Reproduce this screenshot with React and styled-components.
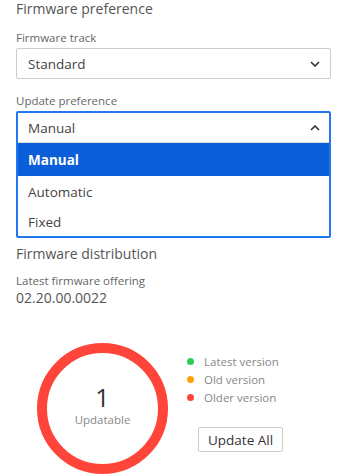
import React from 'react'
import styled, { createGlobalStyle } from 'styled-components'

const Global = createGlobalStyle`
  body {
    margin: 0;
    background: #fff;
    font-family: 'Open Sans', Lato, sans-serif;
  }
`

const Page = styled.div`
  width: 347px;
  height: 475px;
  overflow: hidden;
  padding: 1px 16px 0;
  box-sizing: border-box;
`

const Heading = styled.div`
  font-size: 14px;
  color: #555;
  line-height: 16px;
  margin-top: ${p => p.top || 0}px;
`

const Label = styled.div`
  font-size: 11.5px;
  color: #666;
  line-height: 14px;
  margin-top: ${p => p.top || 0}px;
  margin-bottom: ${p => p.bottom ?? 3}px;
`

const Select = styled.div`
  width: 315px;
  box-sizing: border-box;
  border: ${p => (p.open ? '2px solid #1f78f0' : '1px solid #ccc')};
  border-radius: 2px;
  background: #fff;
`

const SelectHead = styled.div`
  height: 29px;
  display: flex;
  align-items: center;
  justify-content: space-between;
  padding: 0 ${p => (p.open ? 9 : 10)}px 0 ${p => (p.open ? 10 : 11)}px;
  font-size: 13.5px;
  color: #444;
  border-bottom: ${p => (p.open ? '1px solid #ddd' : 'none')};
`

const Option = styled.div`
  height: ${p => p.h}px;
  display: flex;
  align-items: center;
  padding-left: 10px;
  font-size: 13.5px;
  color: ${p => (p.active ? '#fff' : '#444')};
  background: ${p => (p.active ? '#0b5ed7' : '#fff')};
  font-weight: ${p => (p.active ? 700 : 400)};
`

const Version = styled.div`
  font-size: 14px;
  color: #555;
  line-height: 16px;
`

const Chart = styled.div`
  display: flex;
  margin-top: 37px;
  margin-left: 21px;
`

const Ring = styled.div`
  width: 131px;
  height: 131px;
  box-sizing: border-box;
  border-radius: 50%;
  border: 10px solid #ff453a;
  padding-bottom: 7px;
  display: flex;
  flex-direction: column;
  align-items: center;
  justify-content: center;
  flex-shrink: 0;
`

const Count = styled.div`
  font-size: 25px;
  color: #333;
  line-height: 28px;
`

const CountLabel = styled.div`
  font-size: 11.5px;
  color: #888;
  margin-top: 1px;
`

const Side = styled.div`
  margin-left: 19px;
  padding-top: 9px;
  display: flex;
  flex-direction: column;
`

const LegendRow = styled.div`
  display: flex;
  align-items: center;
  height: 18px;
  font-size: 11.5px;
  color: #888;
`

const Dot = styled.span`
  width: 7px;
  height: 7px;
  border-radius: 50%;
  background: ${p => p.color};
  margin-right: 10px;
`

const Button = styled.button`
  align-self: flex-start;
  margin-top: 21px;
  margin-left: 11px;
  height: 25px;
  padding: 0 9px;
  border: 1px solid #ccc;
  border-radius: 2px;
  background: #fff;
  font-family: inherit;
  font-size: 13.5px;
  color: #333;
`

const Chevron = ({ up }) => (
  <svg width="10" height="6" viewBox="0 0 10 6">
    <path
      d={up ? 'M1 5 L5 1 L9 5' : 'M1 1 L5 5 L9 1'}
      fill="none"
      stroke="#333"
      strokeWidth="1.6"
    />
  </svg>
)

export default function App() {
  return (
    <Page>
      <Global />
      <Heading>Firmware preference</Heading>
      <Label top={14}>Firmware track</Label>
      <Select>
        <SelectHead>
          Standard
          <Chevron />
        </SelectHead>
      </Select>
      <Label top={15}>Update preference</Label>
      <Select open>
        <SelectHead open>
          Manual
          <Chevron up />
        </SelectHead>
        <Option h={33} active>Manual</Option>
        <Option h={32}>Automatic</Option>
        <Option h={28}>Fixed</Option>
      </Select>
      <Heading top={8}>Firmware distribution</Heading>
      <Label top={12} bottom={2}>Latest firmware offering</Label>
      <Version>02.20.00.0022</Version>
      <Chart>
        <Ring>
          <Count>1</Count>
          <CountLabel>Updatable</CountLabel>
        </Ring>
        <Side>
          <LegendRow><Dot color="#2ecc55" />Latest version</LegendRow>
          <LegendRow><Dot color="#ff9f0a" />Old version</LegendRow>
          <LegendRow><Dot color="#ff453a" />Older version</LegendRow>
          <Button>Update All</Button>
        </Side>
      </Chart>
    </Page>
  )
}
